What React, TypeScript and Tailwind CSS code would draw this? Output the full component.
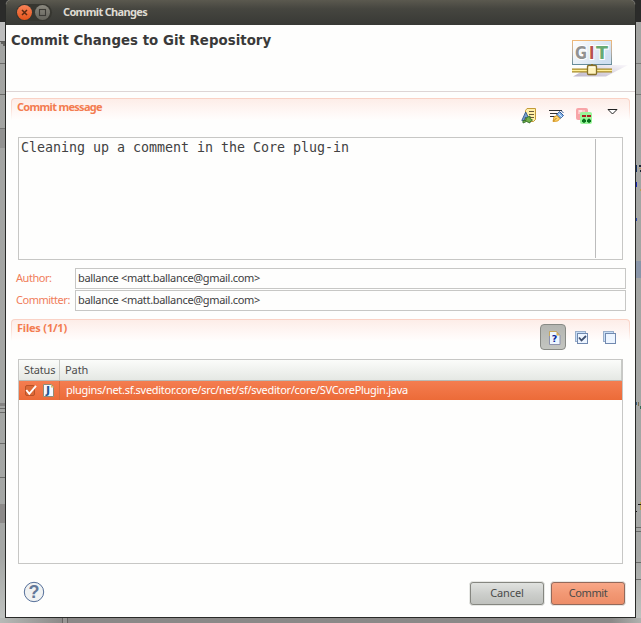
import React from "react";

type Mark = { top: number; height: number; color: string; left?: number; width?: number };

const leftMarks: Mark[] = [
  { top: 0, height: 22, color: "#2b2b2a" },
  { top: 22, height: 19, color: "#bdbdbd" },
  { top: 41, height: 1, color: "#5c5c5a" },
  { top: 42, height: 2, color: "#62625f", left: 1, width: 4 },
  { top: 44, height: 2, color: "#62625f", left: 3, width: 2 },
  { top: 63, height: 1, color: "#6b6b69" },
  { top: 94, height: 1, color: "#6b6b69" },
  { top: 128, height: 1, color: "#757573" },
  { top: 129, height: 19, color: "#929291" },
  { top: 403, height: 3, color: "#858483" },
  { top: 408, height: 1, color: "#6b6b69" },
  { top: 412, height: 1, color: "#6b6b69" },
  { top: 443, height: 1, color: "#6b6b69" },
  { top: 477, height: 1, color: "#6b6b69" },
  { top: 504, height: 19, color: "#8c8a89" },
];

const rightMarks: Mark[] = [
  { top: 0, height: 22, color: "#2b2b2a" },
  { top: 63, height: 1, color: "#777775" },
  { top: 94, height: 1, color: "#777775" },
  { top: 165, height: 7, color: "#17315e", left: 0, width: 1 },
  { top: 165, height: 2, color: "#1d2432", left: 3, width: 2 },
  { top: 168, height: 1, color: "#b39863", left: 3, width: 2 },
  { top: 170, height: 2, color: "#1d2432", left: 4, width: 1 },
  { top: 182, height: 5, color: "#1727b3", left: 0, width: 1 },
  { top: 189, height: 2, color: "#b99b58", left: 4, width: 1 },
  { top: 218, height: 3, color: "#2c48aa", left: 0, width: 1 },
  { top: 261, height: 17, color: "#8995a8" },
  { top: 402, height: 3, color: "#355b7c", left: 0, width: 1 },
  { top: 402, height: 4, color: "#786c4f", left: 2, width: 1 },
  { top: 406, height: 3, color: "#326b57", left: 4, width: 1 },
  { top: 502, height: 8, color: "#baa24f", left: 4, width: 1 },
  { top: 504, height: 1, color: "#1c1c1c", left: 2, width: 3 },
  { top: 511, height: 1, color: "#1c1c1c", left: 0, width: 1 },
  { top: 527, height: 1, color: "#6b6b69" },
  { top: 531, height: 1, color: "#6b6b69" },
  { top: 562, height: 1, color: "#6b6b69" },
  { top: 579, height: 1, color: "#6b6b69" },
];

function Backdrop({ marks }: { marks: Mark[] }) {
  return (
    <div className="relative h-[618px] w-[5px] shrink-0 overflow-hidden bg-linear-to-b from-[#a3a4a2] via-[#a5a7a5] via-90% to-[#bfc2bf]">
      {marks.map((m, i) => (
        <div
          key={i}
          className="absolute"
          style={{ top: m.top, height: m.height, left: m.left ?? 0, width: m.width ?? 5, background: m.color }}
        />
      ))}
    </div>
  );
}

function TitleBar() {
  return (
    <div className="flex h-[25px] items-center bg-linear-to-b from-[#5b594f] via-[#464640] via-35% to-[#383935] pl-[10px]">
      <svg width="38" height="18" viewBox="0 0 38 18" className="shrink-0">
        <defs>
          <linearGradient id="close" x1="0" y1="0" x2="0" y2="1">
            <stop offset="0" stopColor="#f88358" />
            <stop offset="1" stopColor="#e4541b" />
          </linearGradient>
          <linearGradient id="max" x1="0" y1="0" x2="0" y2="1">
            <stop offset="0" stopColor="#8b8980" />
            <stop offset="1" stopColor="#65645c" />
          </linearGradient>
        </defs>
        <rect x="0" y="0" width="36" height="17" rx="8.5" fill="#363630" />
        <circle cx="8.5" cy="8.5" r="7.5" fill="url(#close)" />
        <path d="M6 6 11 11M11 6 6 11" stroke="#5a2a12" strokeWidth="1.5" />
        <circle cx="26.5" cy="8.5" r="7.5" fill="url(#max)" />
        <rect x="23.5" y="5.5" width="6" height="6" fill="none" stroke="#3c3b36" strokeWidth="1.1" />
      </svg>
      <span className="mb-[2px] ml-[9px] text-[11px] leading-none font-bold tracking-[-0.66px] text-[#dfdbd2]">Commit Changes</span>
    </div>
  );
}

function GitLogo() {
  return (
    <svg width="58" height="40" viewBox="0 0 58 40" className="shrink-0">
      <defs>
        <linearGradient id="board" x1="0" y1="0" x2="1" y2="0.5">
          <stop offset="0" stopColor="#ffffff" />
          <stop offset="1" stopColor="#cfdff0" />
        </linearGradient>
        <linearGradient id="frame" x1="0" y1="0" x2="0" y2="1">
          <stop offset="0" stopColor="#f0b878" />
          <stop offset="0.5" stopColor="#b8aca0" />
          <stop offset="1" stopColor="#668d9c" />
        </linearGradient>
        <linearGradient id="shade" x1="0" y1="1" x2="1" y2="0">
          <stop offset="0" stopColor="#bdb6cb" />
          <stop offset="1" stopColor="#faf8fb" />
        </linearGradient>
      </defs>
      <path d="M2 37.5 22 26H57L35 37.5Z" fill="url(#shade)" />
      <rect x="1.5" y="1.5" width="39" height="24" fill="url(#board)" stroke="url(#frame)" />
      <g fontFamily="DejaVu Sans" fontWeight="bold" fontSize="17" stroke="#ffffff" strokeWidth="2" paintOrder="stroke">
        <text x="4" y="20" fill="#929291" textLength="12" lengthAdjust="spacingAndGlyphs">G</text>
        <text x="18" y="20" fill="#b7534e" textLength="5.5" lengthAdjust="spacingAndGlyphs">I</text>
        <text x="25" y="20" fill="#68aa72" textLength="12" lengthAdjust="spacingAndGlyphs">T</text>
      </g>
      <path d="M21 25v4" stroke="#847126" strokeWidth="2" />
      <rect x="1" y="29.5" width="40" height="4" fill="#a68a24" />
      <path d="M1 31.5H41" stroke="#fff09a" strokeWidth="1.4" />
      <rect x="16.5" y="26.5" width="9" height="9" rx="1" fill="#fff3be" stroke="#86702b" strokeWidth="1.3" />
      <path d="M18 28h6" stroke="#ffffff" />
    </svg>
  );
}

function AmendIcon() {
  return (
    <svg width="16" height="16" viewBox="0 0 16 16">
      <path d="M4.5 2.5 6 .5h8.5v11l-2 2h-8Z" fill="#fff0a8" stroke="#c39a38" />
      <path d="M8 3.5h5M8 6.5h5M9 9.5h4" stroke="#695a3a" />
      <path d="M.8 12.5 4.7 4l3 6-2 1.5L4.5 9l-1.5 4Z" fill="#789fce" stroke="#315989" strokeWidth=".9" />
      <path d="M2 12.5h3V10l4-2v2.5l2.5 1.5-2.5 2V15l-3.5-1.5L2 15Z" fill="#75b14b" stroke="#316f2c" strokeWidth=".9" />
    </svg>
  );
}

function SignIcon() {
  return (
    <svg width="16" height="16" viewBox="0 0 16 16">
      <path d="M0 2.5h13M1 5.5h9M1 8.5h6" stroke="#333333" />
      <path d="m7.5 7 3-3.5 4 4-3.3 3Z" fill="#81afe5" stroke="#315d9d" />
      <path d="m9.5 5.5 3.5 3.5" stroke="#d9ecff" />
      <path d="m4 13.5 1-4.5 3-1.5 2.8 3-2 2.5Z" fill="#ffd36a" stroke="#dc9d25" />
      <path d="m4.5 13 3-3" stroke="#b27a1c" />
      <path d="M12 2.5 14.5 5" stroke="#315d9d" fill="none" />
    </svg>
  );
}

function ChangeIdIcon() {
  return (
    <svg width="17" height="17" viewBox="0 0 17 17">
      <rect x="0" y="0" width="12" height="12" rx="2" fill="#f8a5a8" />
      <path d="M2 2h7v4H2Z" fill="#fdc8c8" />
      <path d="M3 3h3" stroke="#fff" />
      <rect x="4" y="4" width="12" height="12" rx="2" fill="#9af69a" />
      <path d="M6 8h4M11 8h4" stroke="#aa1f20" strokeWidth="2" />
      <path d="M8 10.8v4M6 12.8h4M13 10.8v4M11 12.8h4" stroke="#08751b" strokeWidth="2.2" />
    </svg>
  );
}

function UntrackedIcon() {
  return (
    <svg width="12" height="14" viewBox="0 0 12 14">
      <path d="M.5.5h7l3.5 4v9H.5Z" fill="#edf6ff" stroke="#8c91ab" />
      <path d="M.5 5V.5h7" stroke="#c9a85a" fill="none" />
      <path d="M7.5.5v4H11Z" fill="#dfb155" />
      <text x="2.8" y="11.3" fontFamily="DejaVu Sans" fontWeight="bold" fontSize="9.5" fill="#08299c">?</text>
    </svg>
  );
}

function BoxesIcon({ checked }: { checked?: boolean }) {
  return (
    <svg width="14" height="14" viewBox="0 0 14 14">
      <rect x=".5" y=".5" width="10" height="10" fill="#c9def5" stroke="#9aaeca" />
      <rect x="2.5" y="2.5" width="10" height="10" fill="#edf5ff" stroke="#7189af" />
      {checked && <path d="m4 6.5 2.5 3L11 5" stroke="#40506f" strokeWidth="1.8" fill="none" />}
    </svg>
  );
}

function SectionHeader({ title, tracking, children }: { title: string; tracking: string; children: React.ReactNode }) {
  return (
    <div className="mx-[5px] h-[22px] rounded-t-[4px] bg-linear-to-b from-[#fad1c4] via-[#fbdfd6] via-50% to-[#fefefd] px-px pt-px">
      <div className="flex h-[21px] items-start justify-between rounded-t-[3px] bg-linear-to-b from-[#fdede8] via-[#fff8f6] via-65% to-[#fffefd]">
        <h2 className={`pt-px pl-[5px] text-[11px] leading-[13px] font-bold text-[#f37c50] ${tracking}`}>{title}</h2>
        {children}
      </div>
    </div>
  );
}

function PersonField({ label, value, tracking }: { label: string; value: string; tracking: string }) {
  return (
    <div className="flex h-[21px] items-center pl-[10px]">
      <label className={`w-[59px] pb-[2px] text-[11px] leading-none whitespace-nowrap text-[#f07d5a] ${tracking}`}>{label}</label>
      <div className="flex h-[21px] w-[551px] items-center border border-[#c7c7c5] pb-[2px] pl-[2px] text-[11px] leading-none tracking-[-0.32px] text-[#3d3d3d]">{value}</div>
    </div>
  );
}

function FileTable() {
  return (
    <div className="ml-[12px] h-[205px] w-[605px] border border-[#c7c7c5]">
      <div className="flex h-[21px] border-b border-[#b9bab5] bg-linear-to-b from-[#fbfcfa] to-[#e5e8e4] text-[11px] leading-[20px] text-[#4c4c4c]">
        <div className="w-[41px] border-r border-[#c8cac6] pl-[5px] tracking-[-0.15px]">Status</div>
        <div className="flex-1 border-r border-[#c8cac6] pl-[5px] tracking-[-0.1px]">Path</div>
      </div>
      <div className="flex h-[19px] items-center bg-linear-to-b from-[#f47d50] to-[#ec6b38] text-[11px] text-white">
        <div className="flex h-full w-[41px] items-center border-r border-[#d56a3d]">
          <svg width="40" height="19" viewBox="0 0 40 19">
            <rect x="6.5" y="4.5" width="9" height="10" rx="1.5" fill="#dc6937" stroke="#b95228" />
            <path d="m7.3 9 3 3.8L17 4.8" stroke="#fff" strokeWidth="1.9" fill="none" />
            <path d="M24.5 3.5h8l2 2v10h-10Z" fill="#f3f8ff" stroke="#8f8c78" />
            <path d="M32 3.5v3h3" fill="#e1be69" />
            <text x="27" y="12.5" fontFamily="DejaVu Sans" fontWeight="bold" fontSize="11" fill="#21548e">J</text>
          </svg>
        </div>
        <span className="pb-[2px] pl-[6px] leading-none tracking-[-0.285px] whitespace-nowrap">plugins/net.sf.sveditor.core/src/net/sf/sveditor/core/SVCorePlugin.java</span>
      </div>
    </div>
  );
}

export default function App() {
  return (
    <div className="h-[623px] w-[641px] overflow-hidden bg-[#2b2b2a] font-['Noto_Sans',sans-serif]">
      <div className="flex h-[618px]">
        <Backdrop marks={leftMarks} />
        <main className="flex h-[618px] w-[631px] shrink-0 flex-col overflow-hidden rounded-t-[5px] border-x border-b border-[#292a28] bg-[#fefefd]">
          <TitleBar />
          <header className="flex h-[67px] items-start justify-between border-b border-[#ded5d5] pl-[5px]">
            <h1 className="pt-[7px] font-['DejaVu_Sans'] text-[13.33px] leading-[17px] font-bold tracking-[0.03px] whitespace-nowrap text-[#3a3a3a]">Commit Changes to Git Repository</h1>
            <div className="pt-[14px] pr-[6px]"><GitLogo /></div>
          </header>
          <section className="h-[227px] pt-[6px]">
            <SectionHeader title="Commit message" tracking="tracking-[-0.7px]">
              <div className="flex items-start pt-[9px] pr-[10px]">
                <AmendIcon />
                <div className="ml-[12px]"><SignIcon /></div>
                <div className="ml-[11px]"><ChangeIdIcon /></div>
                <svg width="12" height="8" viewBox="0 0 12 8" className="ml-[14px]">
                  <path d="M1 1.5h9L5.5 6Z" fill="white" stroke="#222" />
                </svg>
              </div>
            </SectionHeader>
            <div className="mt-[17px] ml-[12px] flex h-[123px] w-[605px] justify-between border border-[#c7c7c5] py-px pr-[26px] pl-[2px]">
              <div className="font-['DejaVu_Sans_Mono'] text-[13.33px] leading-[17px] tracking-[-0.025px] whitespace-nowrap text-[#424242]">Cleaning up a comment in the Core plug-in</div>
              <div className="h-full w-px bg-[#bcbcbc]" />
            </div>
            <div className="mt-[8px] flex flex-col gap-px">
              <PersonField label="Author:" tracking="tracking-[-0.45px]" value="ballance <matt.ballance@gmail.com>" />
              <PersonField label="Committer:" tracking="tracking-[-0.48px]" value="ballance <matt.ballance@gmail.com>" />
            </div>
          </section>
          <section className="h-[40px]">
            <SectionHeader title="Files (1/1)" tracking="tracking-[-0.2px]">
              <div className="flex items-start pt-[4px] pr-[12px]">
                <button className="flex h-[26px] w-[26px] items-center justify-center rounded-[4px] border border-[#888a85] bg-linear-to-b from-[#b4b5b1] to-[#c3c5c0] pt-[2px] pl-[3px]"><UntrackedIcon /></button>
                <div className="mt-[7px] ml-[9px]"><BoxesIcon checked /></div>
                <div className="mt-[7px] ml-[14px]"><BoxesIcon /></div>
              </div>
            </SectionHeader>
          </section>
          <FileTable />
          <footer className="flex flex-1 items-start justify-between pt-[17px] pr-[9px] pl-[17px]">
            <svg width="22" height="22" viewBox="0 0 22 22">
              <circle cx="11" cy="11" r="9.7" fill="#f0f2f2" stroke="#556f99" />
              <text x="5.5" y="17" fontFamily="Liberation Sans" fontWeight="bold" fontSize="18" fill="#637899">?</text>
            </svg>
            <div className="flex gap-[5px]">
              <button className="flex h-[25px] w-[76px] items-center justify-center rounded-[4px] border border-[#e7e8e5] bg-[#858680] p-px">
                <span className="flex h-full w-full items-center justify-center rounded-[2px] bg-linear-to-b from-[#e0e2df] via-[#cdcfcc] to-[#bfc1bd] pb-[2px] text-[11px] leading-none tracking-[-0.1px] text-[#4b4b4a]">Cancel</span>
              </button>
              <button className="flex h-[25px] w-[76px] items-center justify-center rounded-[4px] border border-[#e7e8e5] bg-[#93695a] p-px">
                <span className="flex h-full w-full items-center justify-center rounded-[2px] bg-linear-to-b from-[#f8a787] via-[#f29874] to-[#ed8d68] pb-[2px] text-[11px] leading-none tracking-[-0.4px] text-[#4b4b4a]">Commit</span>
              </button>
            </div>
          </footer>
        </main>
        <Backdrop marks={rightMarks} />
      </div>
      <div className="flex h-[5px] bg-linear-to-r from-[#b7bab7] via-[#8b8988] via-10% to-[#8b8988]">
        <div className="ml-[62px] w-[6px] border-x border-[#666462] bg-[#999795]" />
        <div className="ml-auto w-[30px] bg-linear-to-r from-transparent to-[#b0b2af]" />
      </div>
    </div>
  );
}
